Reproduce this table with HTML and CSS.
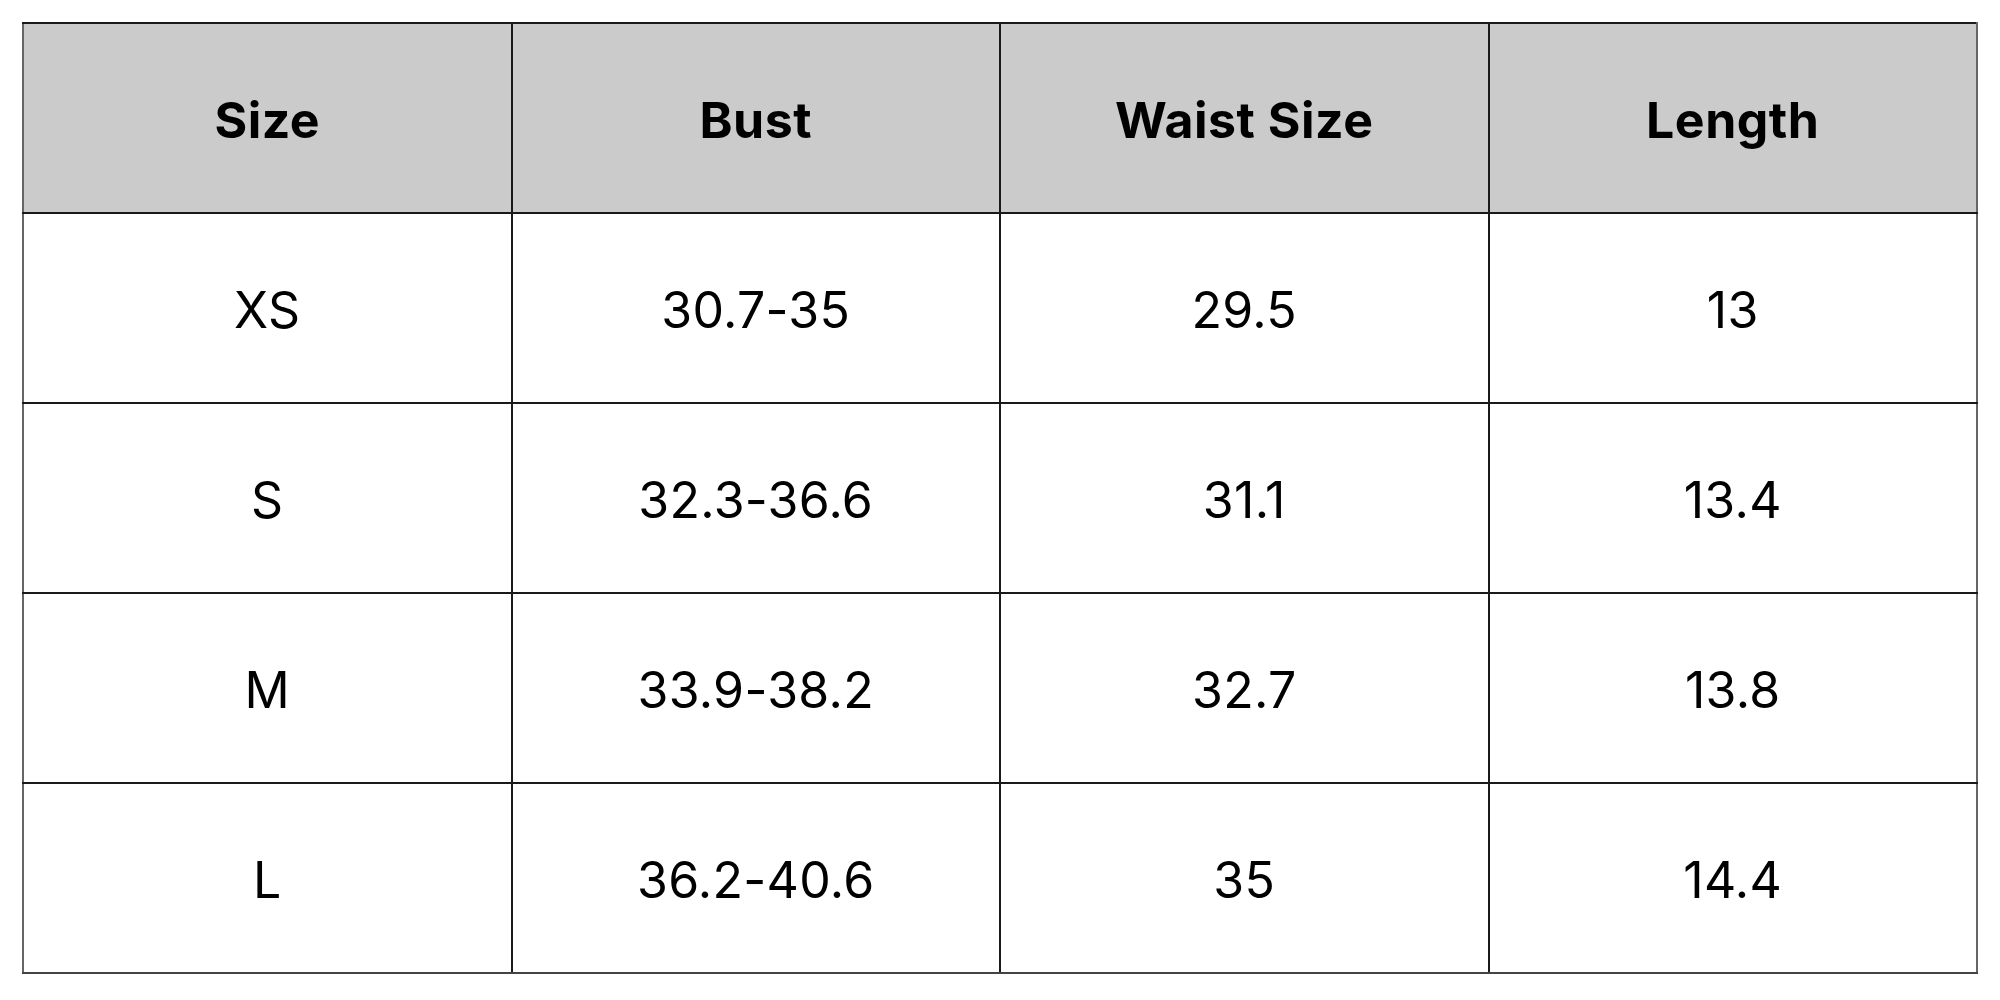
FILE: index.html
```html
<!DOCTYPE html>
<html>
<head>
<meta charset="utf-8">
<link rel="stylesheet" href="styles.css">
</head>
<body>
<div class="page">
<table class="chart">
  <thead>
    <tr><th>Size</th><th>Bust</th><th>Waist Size</th><th>Length</th></tr>
  </thead>
  <tbody>
    <tr><td>XS</td><td>30.7-35</td><td>29.5</td><td>13</td></tr>
    <tr><td>S</td><td>32.3-36.6</td><td>31.1</td><td>13.4</td></tr>
    <tr><td>M</td><td>33.9-38.2</td><td>32.7</td><td>13.8</td></tr>
    <tr><td>L</td><td>36.2-40.6</td><td>35</td><td>14.4</td></tr>
  </tbody>
</table>
</div>
</body>
</html>
```
FILE: styles.css
```css
html, body {
  margin: 0;
  padding: 0;
  background: #ffffff;
}
.page {
  padding: 22px 22px 0 22px;
}
.chart {
  width: 1956px;
  border-collapse: collapse;
  table-layout: fixed;
  font-family: Inter, "Noto Sans", sans-serif;
  color: #000;
  border: 2px solid #555;
}
.chart th, .chart td {
  height: 184px;
  padding: 4px 0 0 0;
  text-align: center;
  vertical-align: middle;
  border: 2px solid #1a1a1a;
}
.chart th {
  background: #cbcbcb;
  font-weight: 700;
  font-size: 50px;
  letter-spacing: 0.5px;
}
.chart td {
  font-weight: 400;
  font-size: 50px;
  letter-spacing: 0.3px;
}
.chart tr > :first-child { border-left-color: #666; }
.chart tr > :last-child { border-right-color: #666; }
.chart tbody tr:last-child td { border-bottom-color: #444; }
```
